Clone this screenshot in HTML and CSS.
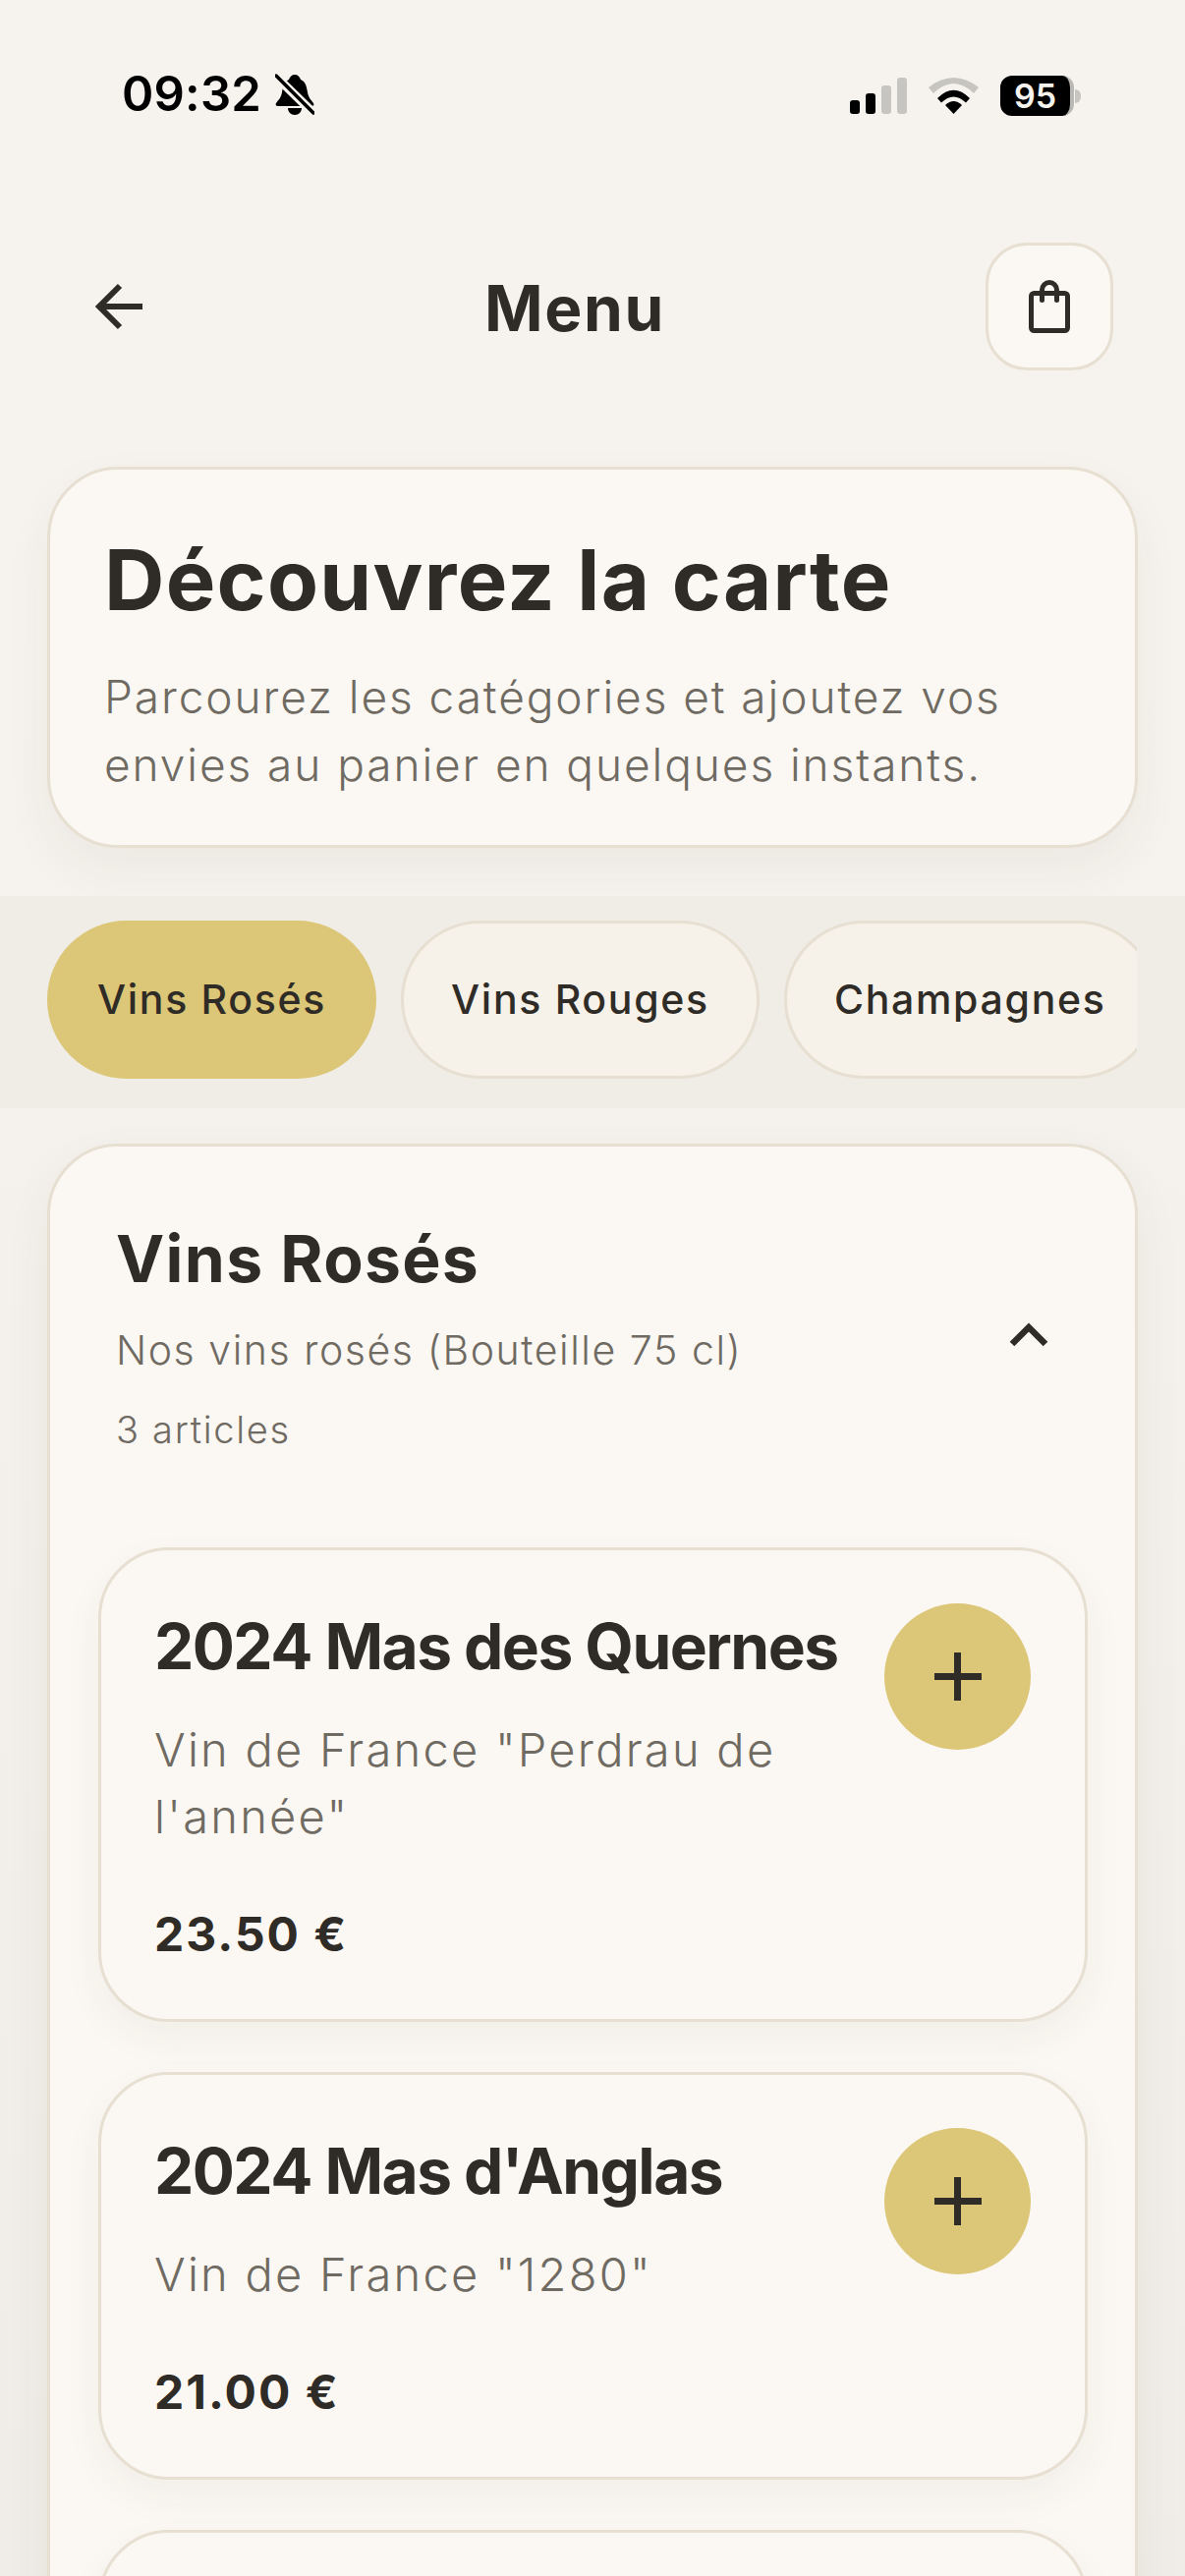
FILE: index.html
```html
<!DOCTYPE html>
<html lang="fr">

<head>
    <meta charset="UTF-8">
    <meta name="viewport" content="width=device-width, initial-scale=1.0">
    <title>Menu</title>
    <link rel="stylesheet" href="styles.css">
</head>

<body>
    <div class="phone">
        <!-- barre de statut -->
        <div class="status">
            <div class="status-left">
                <span class="time">09:32</span>
                <svg class="bell" width="40" height="42" viewBox="0 0 40 42">
                    <path d="M20 1c3 0 5 2 6 5 5 2 6 7 7 13 1 6 4 8 6 11 1 2 0 3-2 3H3c-2 0-3-1-2-3 2-3 5-5 6-11 1-6 2-11 7-13 1-3 3-5 6-5z" fill="#000"/>
                    <path d="M13 35h14c0 4-3 7-7 7s-7-3-7-7z" fill="#000"/>
                    <path d="M-1 1l42 41" stroke="#f6f3ee" stroke-width="9"/>
                    <path d="M1 2l38 38" stroke="#000" stroke-width="3.5" stroke-linecap="round"/>
                </svg>
            </div>
            <div class="status-right">
                <div class="signal">
                    <i class="bar b1"></i>
                    <i class="bar b2"></i>
                    <i class="bar b3"></i>
                    <i class="bar b4"></i>
                </div>
                <svg class="wifi" width="51" height="37" viewBox="0 0 51 37">
                    <path d="M0 10Q25.5-10 51 10l-5 6Q25.5-4 5 16z" fill="#c6c5c1"/>
                    <path d="M9 21Q25.5 4.500 42 21l-4 4.500Q25.500 13.500 13 25.500z" fill="#000"/>
                    <path d="M17 28Q25.500 20 34 28l-8.500 9z" fill="#000"/>
                </svg>
                <div class="battery">
                    <span class="battery-level">95</span>
                    <i class="battery-cap"></i>
                </div>
            </div>
        </div>

        <!-- entete -->
        <div class="topbar">
            <svg class="back" width="50" height="48" viewBox="0 0 50 48">
                <path d="M48 24H4M25 3L4 24l21 21" fill="none" stroke="#2f2b26" stroke-width="6"/>
            </svg>
            <h1 class="topbar-title">Menu</h1>
            <button class="cart">
                <svg width="44" height="56" viewBox="0 0 44 56">
                    <rect x="3.500" y="14.500" width="37" height="38" rx="3" fill="none" stroke="#2f2b26" stroke-width="5"/>
                    <path d="M14.500 21.500V11a7.500 7.500 0 0 1 15 0v10.500" fill="none" stroke="#2f2b26" stroke-width="5" stroke-linecap="round"/>
                </svg>
            </button>
        </div>

        <div class="hero">
            <h2>Découvrez la carte</h2>
            <p>Parcourez les catégories et ajoutez vos envies au panier en quelques instants.</p>
        </div>

        <div class="tabs">
            <div class="tabs-inner">
                <div class="tab active">Vins Rosés</div>
                <div class="tab">Vins Rouges</div>
                <div class="tab">Champagnes</div>
            </div>
        </div>

        <div class="section">
            <div class="section-head">
                <div>
                    <h3>Vins Rosés</h3>
                    <p class="section-desc">Nos vins rosés (Bouteille 75 cl)</p>
                    <p class="section-count">3 articles</p>
                </div>
                <svg class="chevron" width="40" height="26" viewBox="0 0 40 26">
                    <path d="M3 23L20 6l17 17" fill="none" stroke="#2f2b26" stroke-width="6.500"/>
                </svg>
            </div>

            <div class="item">
                <div class="item-text">
                    <h4>2024 Mas des Quernes</h4>
                    <p class="item-desc">Vin de France "Perdrau de l'année"</p>
                    <p class="price">23.50 €</p>
                </div>
                <button class="add"><i class="plus"></i></button>
            </div>

            <div class="item">
                <div class="item-text">
                    <h4>2024 Mas d'Anglas</h4>
                    <p class="item-desc">Vin de France "1280"</p>
                    <p class="price">21.00 €</p>
                </div>
                <button class="add"><i class="plus"></i></button>
            </div>

            <div class="item item-last"></div>
        </div>
    </div>
</body>

</html>
```

FILE: styles.css
```css
* {
    margin: 0;
    padding: 0;
    box-sizing: border-box;
}

html,
body {
    height: 100%;
    overflow: hidden;
}

body {
    background: linear-gradient(#f6f3ee 25%, #f0ede8 100%);
    color: #2f2b26;
    font-family: Inter, "Liberation Sans", sans-serif;
}

.phone {
    width: 1206px;
    height: 2622px;
    overflow: hidden;
}

/* status */
.status {
    height: 240px;
    padding: 74px 106px 0 124px;
    display: flex;
    justify-content: space-between;
    align-items: flex-start;
    color: #000;
}

.status-left {
    display: flex;
    align-items: center;
    gap: 14px;
}

.time {
    font-size: 49px;
    font-weight: 600;
    line-height: 44px;
    letter-spacing: 0.2px;
}

.status-right {
    display: flex;
    align-items: center;
    gap: 22px;
    padding-top: 3px;
}

.signal {
    display: flex;
    align-items: flex-end;
    gap: 6px;
    height: 37px;
}

.bar {
    width: 10px;
    border-radius: 3px;
    background: #000;
}

.b1 {
    height: 14px;
}

.b2 {
    height: 21px;
}

.b3 {
    height: 29px;
    background: #c6c5c1;
}

.b4 {
    height: 37px;
    background: #c6c5c1;
}

.battery {
    display: flex;
    align-items: center;
}

.battery-level {
    width: 75px;
    height: 41px;
    border-radius: 12px;
    background: #000;
    border-right: 4px solid #b9b8b4;
    color: #f6f3ee;
    font-size: 34px;
    font-weight: 600;
    line-height: 41px;
    text-align: center;
}

.battery-cap {
    width: 6px;
    height: 14px;
    margin-left: 1px;
    border-radius: 0 7px 7px 0;
    background: #c6c5c1;
}

/* entete */
.topbar {
    height: 130px;
    margin-top: 7px;
    padding: 0 73px 0 97px;
    display: flex;
    justify-content: space-between;
    align-items: center;
}

.topbar-title {
    padding-top: 2px;
    margin-left: 20px;
    font-size: 64px;
    font-weight: 700;
    letter-spacing: 1.6px;
}

.cart {
    width: 130px;
    height: 130px;
    border: 3px solid #e6dfd2;
    border-radius: 42px;
    background: #fbf8f3;
    display: flex;
    justify-content: center;
    align-items: center;
}

.hero {
    margin: 98px 48px 0;
    height: 388px;
    padding: 63px 55px 0;
    border: 3px solid #e6dfd2;
    border-radius: 72px;
    background: #fbf8f3;
    box-shadow: 0 20px 50px rgba(60, 50, 30, 0.05);
}

.hero h2 {
    font-size: 85px;
    font-weight: 700;
    line-height: 100px;
    letter-spacing: 1.3px;
}

.hero p {
    margin-top: 34px;
    color: #6f6a62;
    font-size: 46px;
    font-weight: 300;
    line-height: 69px;
    letter-spacing: 1.92px;
}

.tabs {
    margin-top: 49px;
    height: 216px;
    padding: 25px 49px 0 48px;
    background: #f0ede7;
}

.tabs-inner {
    display: flex;
    gap: 25px;
    overflow: hidden;
}

.tab {
    flex: none;
    height: 161px;
    padding: 0 48px;
    border: 3px solid #e6dfd2;
    border-radius: 81px;
    background: #f6f2e9;
    font-size: 41px;
    font-weight: 500;
    letter-spacing: 1.7px;
    line-height: 155px;
}

.tab.active {
    border-color: #dcc677;
    background: #dcc677;
}

.section {
    margin: 36px 48px 0;
    height: 1600px;
    padding: 0 48px 0 49px;
    border: 3px solid #e6dfd2;
    border-radius: 72px;
    background: #fbf8f3;
    box-shadow: 0 20px 50px rgba(60, 50, 30, 0.06);
}

.section-head {
    height: 408px;
    padding: 74px 40px 0 18px;
    display: flex;
    justify-content: space-between;
    align-items: flex-start;
}

.section-head h3 {
    font-size: 66px;
    font-weight: 700;
    line-height: 80px;
    letter-spacing: 1.3px;
}

.section-desc {
    margin-top: 27px;
    color: #6f6a62;
    font-size: 41px;
    font-weight: 300;
    line-height: 52px;
    letter-spacing: 1.56px;
}

.section-count {
    margin-top: 30px;
    color: #6f6a62;
    font-size: 38px;
    font-weight: 300;
    line-height: 50px;
    letter-spacing: 1.7px;
}

.chevron {
    margin-top: 104px;
}

.item {
    margin-bottom: 51px;
    padding: 54px 55px 56px 54px;
    display: flex;
    justify-content: space-between;
    align-items: flex-start;
    border: 3px solid #e6dfd2;
    border-radius: 72px;
    background: #fbf8f3;
    box-shadow: 0 16px 40px rgba(60, 50, 30, 0.05);
}

.item-last {
    height: 300px;
}

.item-text {
    width: 700px;
}

.item h4 {
    margin-top: 12px;
    font-size: 64px;
    font-weight: 700;
    line-height: 64px;
    letter-spacing: -1.55px;
}

.item-desc {
    margin-top: 39px;
    color: #6f6a62;
    font-size: 47px;
    font-weight: 300;
    line-height: 68px;
    letter-spacing: 2.25px;
}

.price {
    margin-top: 56px;
    font-size: 48px;
    font-weight: 700;
    line-height: 60px;
    letter-spacing: 2px;
}

.add {
    flex: none;
    width: 149px;
    height: 149px;
    border: none;
    border-radius: 50%;
    background: #dcc677;
    display: flex;
    justify-content: center;
    align-items: center;
}

.plus {
    display: block;
    width: 48px;
    height: 49px;
    background:
        linear-gradient(#2f2b26, #2f2b26) center / 100% 7px no-repeat,
        linear-gradient(#2f2b26, #2f2b26) center / 7px 100% no-repeat;
}
```
